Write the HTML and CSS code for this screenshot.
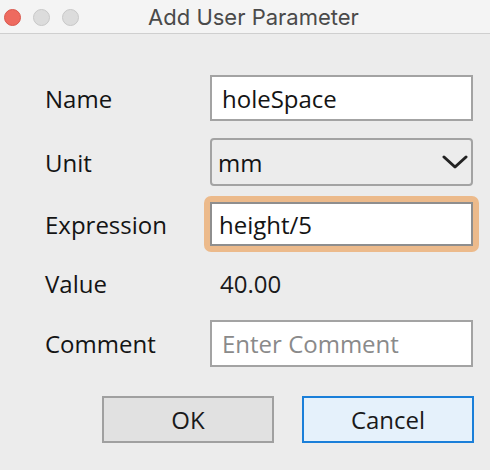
FILE: index.html
```html
<!DOCTYPE html>
<html>
<head>
<meta charset="utf-8">
<link rel="stylesheet" href="styles.css">
</head>
<body>
<div class="window">
  <div class="titlebar">
    <div class="lights">
      <span class="light red"></span>
      <span class="light grey"></span>
      <span class="light grey"></span>
    </div>
    <div class="title">Add User Parameter</div>
  </div>
  <div class="form">
    <div class="row r-name">
      <div class="label">Name</div>
      <div class="field input">holeSpace</div>
    </div>
    <div class="row r-unit">
      <div class="label">Unit</div>
      <div class="field select">
        <span>mm</span>
        <svg class="chev" width="26" height="14" viewBox="0 0 26 14"><path d="M2 2 L13 12 L24 2" fill="none" stroke="#222" stroke-width="3" stroke-linecap="round" stroke-linejoin="round"/></svg>
      </div>
    </div>
    <div class="row r-expr">
      <div class="label">Expression</div>
      <div class="ring"><div class="field input focused">height/5</div></div>
    </div>
    <div class="row r-value">
      <div class="label">Value</div>
      <div class="value">40.00</div>
    </div>
    <div class="row r-comment">
      <div class="label">Comment</div>
      <div class="field input placeholder">Enter Comment</div>
    </div>
    <div class="buttons">
      <div class="btn ok">OK</div>
      <div class="btn cancel">Cancel</div>
    </div>
  </div>
</div>
</body>
</html>
```

FILE: styles.css
```css
html, body {
  margin: 0;
  padding: 0;
}
body {
  width: 490px;
  height: 470px;
  background: #ececec;
  font-family: "Open Sans", "Noto Sans", sans-serif;
  color: #1a1a1a;
  overflow: hidden;
}
.titlebar {
  height: 33px;
  background: #f4f4f4;
  border-bottom: 1px solid #cfcfcf;
  display: flex;
  align-items: center;
  position: relative;
}
.lights {
  display: flex;
  gap: 12px;
  padding-left: 4px;
  padding-top: 1px;
}
.light {
  width: 17px;
  height: 17px;
  border-radius: 50%;
  box-sizing: border-box;
}
.red {
  background: #ee6a5f;
  border: 1px solid #d9574d;
}
.grey {
  background: #dcdcdc;
  border: 1px solid #c8c8c8;
}
.title {
  position: absolute;
  left: 0;
  right: 0;
  top: 0;
  bottom: 0;
  display: flex;
  align-items: center;
  justify-content: center;
  padding-left: 17px;
  font-family: "Inter", "Liberation Sans", sans-serif;
  font-size: 22px;
  color: #4a4a4a;
}
.form {
  padding-left: 45px;
  display: flex;
  flex-direction: column;
}
.row {
  display: grid;
  grid-template-columns: 165px 263px;
  align-items: center;
  font-size: 24px;
}
.label {
  color: #141414;
}
.field {
  box-sizing: border-box;
  background: #fff;
  border: 2px solid #a3a3a3;
  display: flex;
  align-items: center;
  padding-left: 10px;
  color: #141414;
}
.r-name { margin-top: 41px; }
.r-name .field { height: 46px; }
.r-unit { margin-top: 17px; }
.select {
  height: 48px;
  background: #ececec;
  border-radius: 4px;
  justify-content: space-between;
  padding-left: 6px;
  padding-right: 3px;
}
.r-expr { margin-top: 10px; }
.ring {
  margin-left: -6px;
  width: 275px;
  padding: 6px;
  box-sizing: border-box;
  background: #ecba8b;
  border-radius: 7px;
}
.focused {
  height: 44px;
  border-color: #8e8e8e;
  padding-left: 7px;
}
.r-value { margin-top: 6px; height: 50px; }
.value { padding-left: 10px; }
.r-comment { margin-top: 12px; }
.r-comment .field { height: 47px; }
.placeholder { color: #8a8a8a; padding-left: 10px; }
.buttons {
  display: flex;
  justify-content: flex-end;
  gap: 28px;
  width: 429px;
  margin-top: 29px;
}
.btn {
  width: 172px;
  height: 47px;
  box-sizing: border-box;
  display: flex;
  align-items: center;
  justify-content: center;
  font-size: 24px;
  color: #1a1a1a;
}
.ok {
  background: #e1e1e1;
  border: 2px solid #a0a0a0;
}
.cancel {
  background: #e5f1fb;
  border: 2px solid #1a7fd9;
}
```
